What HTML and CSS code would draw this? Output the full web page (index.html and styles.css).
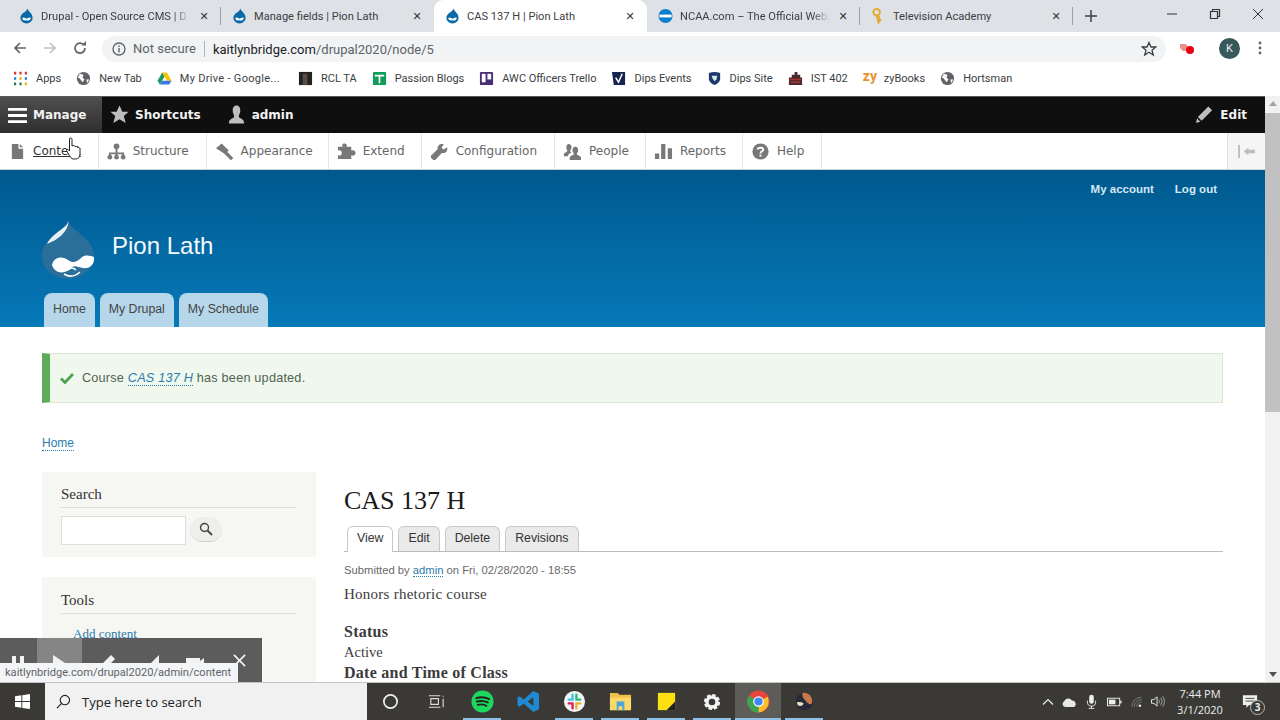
FILE: index.html
```html
<!DOCTYPE html>
<html lang="en">
<head>
    <meta charset="UTF-8">
    <title>CAS 137 H | Pion Lath</title>
    <link rel="stylesheet" href="styles.css">
</head>
<body>
    <svg class="defs" width="0" height="0">
        <symbol id="drop" viewBox="0 0 16 16">
            <path d="M9 0C9.500 3 14.500 5 14.500 10A6.500 6 0 0 1 1.500 10C1.500 5 8 4 9 0Z" fill="#0a6aa8"/>
            <path d="M3.500 10.500C5 8.500 7 11 8 11S11 9 12.500 10C12.500 12 10 13.500 8 12.500C6 13.500 4 12.500 3.500 10.500Z" fill="#fff"/>
        </symbol>
        <symbol id="globe" viewBox="0 0 16 16">
            <circle cx="8" cy="8" r="7" fill="#5f6368"/>
            <path d="M4 3L8 4L7 7L9 9L7 12L4 8L2 7ZM11 9L14 9L12 13Z" fill="#fff"/>
        </symbol>
    </svg>

    <!-- tab strip -->
    <div class="tabstrip">
        <div class="tab">
            <svg class="favicon"><use href="#drop"/></svg>
            <span class="tab-title fade">Drupal - Open Source CMS | D</span>
            <span class="tab-close">✕</span>
        </div>
        <div class="tab">
            <svg class="favicon"><use href="#drop"/></svg>
            <span class="tab-title">Manage fields | Pion Lath</span>
            <span class="tab-close">✕</span>
        </div>
        <div class="tab active">
            <svg class="favicon"><use href="#drop"/></svg>
            <span class="tab-title">CAS 137 H | Pion Lath</span>
            <span class="tab-close">✕</span>
        </div>
        <div class="tab">
            <svg class="favicon" viewBox="0 0 16 16"><circle cx="8" cy="8" r="7.500" fill="#0a7fd0"/><rect x="1.500" y="6.500" width="13" height="3" fill="#fff"/></svg>
            <span class="tab-title fade">NCAA.com – The Official Webs</span>
            <span class="tab-close">✕</span>
        </div>
        <div class="tab last">
            <svg class="favicon" viewBox="0 0 16 16"><circle cx="6" cy="4" r="3.500" fill="none" stroke="#e2ab2e" stroke-width="2"/><path d="M6 7L8 15L10 12L8 10L9 8" fill="none" stroke="#e2ab2e" stroke-width="2"/></svg>
            <span class="tab-title">Television Academy</span>
            <span class="tab-close">✕</span>
        </div>
        <svg class="new-tab" viewBox="0 0 12 12"><path d="M6 0V12M0 6H12" stroke="#3c4043" stroke-width="1.500"/></svg>
        <div class="window-controls">
            <svg viewBox="0 0 12 12"><path d="M1 6H11" stroke="#333" stroke-width="1"/></svg>
            <svg viewBox="0 0 12 12"><path d="M3.500 3.500V1.500H10.500V8.500H8.500M1.500 3.500H8.500V10.500H1.500Z" fill="none" stroke="#333" stroke-width="1.200"/></svg>
            <svg viewBox="0 0 12 12"><path d="M1 1L11 11M11 1L1 11" stroke="#333" stroke-width="1"/></svg>
        </div>
    </div>

    <!-- address bar -->
    <div class="addressbar">
        <svg class="nav-icon" viewBox="0 0 16 16"><path d="M14 8H3M8 3L3 8L8 13" fill="none" stroke="#5f6368" stroke-width="1.700"/></svg>
        <svg class="nav-icon" viewBox="0 0 16 16"><path d="M2 8H13M8 3L13 8L8 13" fill="none" stroke="#bdc1c6" stroke-width="1.700"/></svg>
        <svg class="nav-icon" viewBox="0 0 16 16"><path d="M13 8A5 5 0 1 1 11.500 4.500" fill="none" stroke="#5f6368" stroke-width="1.700"/><path d="M9.500 5.500H14V1Z" fill="#5f6368"/></svg>
        <div class="omnibox">
            <svg class="info" viewBox="0 0 14 14"><circle cx="7" cy="7" r="6" fill="none" stroke="#5f6368" stroke-width="1.300"/><path d="M7 6V10.500M7 3.500V5" stroke="#5f6368" stroke-width="1.400"/></svg>
            <span class="not-secure">Not secure</span>
            <span class="url"><b>kaitlynbridge.com</b>/drupal2020/node/5</span>
            <svg class="star" viewBox="0 0 16 16"><path d="M8 1.500L10 6H14.800L11 9.200L12.300 14L8 11.300L3.700 14L5 9.200L1.200 6H6Z" fill="none" stroke="#3c4043" stroke-width="1.300"/></svg>
        </div>
        <svg class="ext" viewBox="0 0 16 16"><path d="M1 4H7L9 7V11H4L1 8Z" fill="#ee8d8d"/><circle cx="11" cy="10" r="4" fill="#e8000e"/></svg>
        <span class="avatar">K</span>
        <svg class="menu-dots" viewBox="0 0 4 16"><circle cx="2" cy="3" r="1.400" fill="#5f6368"/><circle cx="2" cy="8" r="1.400" fill="#5f6368"/><circle cx="2" cy="13" r="1.400" fill="#5f6368"/></svg>
    </div>

    <!-- bookmarks -->
    <div class="bookmarks">
        <span class="bookmark">
            <svg class="bm-icon" viewBox="0 0 14 14">
                <path d="M1 2H3M6 2H8M11 2H13" stroke="#d93025" stroke-width="2.500"/>
                <path d="M1 7H3M11 7H13" stroke="#1a73e8" stroke-width="2.500"/><path d="M6 7H8" stroke="#f9ab00" stroke-width="2.500"/>
                <path d="M1 12H3M6 12H8" stroke="#188038" stroke-width="2.500"/><path d="M11 12H13" stroke="#f9ab00" stroke-width="2.500"/>
            </svg>Apps
        </span>
        <span class="bookmark"><svg class="bm-icon"><use href="#globe"/></svg>New Tab</span>
        <span class="bookmark wide">
            <svg class="bm-icon" viewBox="0 0 16 16"><path d="M5.500 1.500H10.500L15.500 10.500H10.500Z" fill="#ffc107"/><path d="M5.500 1.500L8 6L3 14.500L0.500 10.500Z" fill="#1e9e5a"/><path d="M5.500 10.500H15.500L13 14.500H3Z" fill="#3b78e7"/></svg>My Drive - Google...
        </span>
        <span class="bookmark"><svg class="bm-icon" viewBox="0 0 16 16"><rect x="1" y="1" width="14" height="14" fill="#222"/><rect x="5" y="3" width="5" height="12" fill="#5b4a42"/></svg>RCL TA</span>
        <span class="bookmark"><svg class="bm-icon" viewBox="0 0 16 16"><rect x="1" y="1" width="14" height="14" rx="1" fill="#0f9d58"/><path d="M3 5H13M8 5V13" stroke="#fff" stroke-width="1.800"/></svg>Passion Blogs</span>
        <span class="bookmark"><svg class="bm-icon" viewBox="0 0 16 16"><rect x="1" y="1" width="14" height="14" rx="1" fill="#4a2d73"/><rect x="3" y="3" width="4" height="9" fill="#fff"/><rect x="9" y="3" width="4" height="6" fill="#fff"/></svg>AWC Officers Trello</span>
        <span class="bookmark"><svg class="bm-icon" viewBox="0 0 16 16"><path d="M1 1H15V15H3Z" fill="#16254f"/><path d="M5 7L8 12L12 3" fill="none" stroke="#fff" stroke-width="1.600"/></svg>Dips Events</span>
        <span class="bookmark"><svg class="bm-icon" viewBox="0 0 16 16"><path d="M2 2Q8 0 14 2V9Q13 13 8 15Q3 13 2 9Z" fill="#1b3a6b"/><path d="M5 5L11 5L10 9L8 11L6 8Z" fill="#dfe6ee"/></svg>Dips Site</span>
        <span class="bookmark"><svg class="bm-icon" viewBox="0 0 16 16"><path d="M7 1H10V4H13V7H15V15H1V7H4V4H7Z" fill="#4a2a2a"/><path d="M2 9H14M3 12H13" stroke="#a33" stroke-width="1.500"/></svg>IST 402</span>
        <span class="bookmark"><span class="zy">zy</span>zyBooks</span>
        <span class="bookmark"><svg class="bm-icon"><use href="#globe"/></svg>Hortsman</span>
    </div>

    <!-- browser viewport -->
    <div class="viewport">
        <div class="site">
            <div class="toolbar">
                <span class="toolbar-item manage">
                    <svg class="tb-icon" viewBox="0 0 20 20"><path d="M1 3.500H19M1 10H19M1 16.500H19" stroke="#fff" stroke-width="3" stroke-linecap="round"/></svg>Manage
                </span>
                <span class="toolbar-item">
                    <svg class="tb-icon" viewBox="0 0 20 20"><path d="M10 0.500L13 7H19.500L14.500 11.500L16.500 19L10 15L3.500 19L5.500 11.500L0.500 7H7Z" fill="#bebebe"/></svg>Shortcuts
                </span>
                <span class="toolbar-item">
                    <svg class="tb-icon" viewBox="0 0 20 20"><path d="M10 0.500C13 0.500 14 3 14 6C14 8.500 12.500 10 12.500 12C12.500 14 18 14.500 18 18.500V19.500H2V18.500C2 14.500 7.500 14 7.500 12C7.500 10 6 8.500 6 6C6 3 7 0.500 10 0.500Z" fill="#bebebe"/></svg>admin
                </span>
                <span class="toolbar-item edit">
                    <svg class="tb-icon" viewBox="0 0 20 20"><path d="M14 1.500L18 5.500L7 16.500L3 12.500ZM2.200 14L5.500 17.500L1 19Z" fill="#bebebe"/></svg>Edit
                </span>
            </div>
            <div class="tray">
                <a class="tray-item current"><svg class="tray-icon" viewBox="0 0 16 20"><path d="M2 2H9V7H14V18H2ZM10.500 2L14 5.500H10.500Z" fill="#787878"/></svg><span class="hovered">Content</span></a>
                <a class="tray-item"><svg class="tray-icon" viewBox="0 0 20 20"><path d="M10 7V12M3 17V12H17V17M10 12V17" fill="none" stroke="#787878" stroke-width="2"/><circle cx="10" cy="4.500" r="3" fill="#787878"/><circle cx="3" cy="16" r="2.500" fill="#787878"/><circle cx="10" cy="16" r="2.500" fill="#787878"/><circle cx="17" cy="16" r="2.500" fill="#787878"/></svg>Structure</a>
                <a class="tray-item tight"><svg class="tray-icon" viewBox="0 0 20 20"><path d="M7 1.500L14.500 9L10.500 12.500L1 6.500Z" fill="#787878"/><path d="M11 11L18 18" stroke="#787878" stroke-width="3.500"/></svg>Appearance</a>
                <a class="tray-item snug"><svg class="tray-icon" viewBox="0 0 20 20"><path d="M1 5H6C5 2 6.500 1.500 8 1.500S11 2.500 10 5H15V9C17 8 19.500 9 19.500 11.500S17 15 15 14V18H1V14C4 15 5 13 5 11.500S4 8 1 9Z" fill="#787878"/></svg>Extend</a>
                <a class="tray-item"><svg class="tray-icon" viewBox="0 0 20 20"><path d="M18 5.500L14.500 8L12 6L14.500 2.500C11 1 7.500 3.500 8 7.500L1 14.500V16.500L3.500 19H5.500L12.500 11.500C16 12.500 19 9.500 18 5.500Z" fill="#787878"/></svg>Configuration</a>
                <a class="tray-item snug"><svg class="tray-icon" viewBox="0 0 20 20"><path d="M6 2C8 2 9 3.500 9 5.500C9 7.500 7.500 8.500 7.500 10L9 11C6 12 5 14 5 15H1V13C1 11 4.500 11 4.500 9.500C4.500 8.500 3.500 7.500 3.500 5.500S4.500 2 6 2Z" fill="#787878"/><path d="M13 5C15.500 5 16 7 16 9S14.500 11.500 14.500 12.500C14.500 14 19 14 19 17V19H7V17C7 14 11.500 14 11.500 12.500C11.500 11.500 10 11 10 9S10.500 5 13 5Z" fill="#787878"/></svg>People</a>
                <a class="tray-item snug"><svg class="tray-icon" viewBox="0 0 20 20"><path d="M1 12H5.500V18H1ZM7.500 2H12V18H7.500ZM14.500 6.500H19V18H14.500Z" fill="#787878"/></svg>Reports</a>
                <a class="tray-item help"><svg class="tray-icon" viewBox="0 0 20 20"><circle cx="10" cy="10" r="8.500" fill="#787878"/><path d="M7 8C7 5.500 13 5.500 13 8C13 10 10 9.500 10 12" fill="none" stroke="#fff" stroke-width="2"/><rect x="9" y="13.300" width="2" height="2" fill="#fff"/></svg>Help</a>
                <span class="tray-toggle"><svg viewBox="0 0 20 14" class="toggle-icon"><path d="M1 0H3V14H1ZM7 7L12 3V5H19V9H12V11Z" fill="#bdbdbd"/></svg></span>
            </div>

            <header class="site-header">
                <nav class="secondary-menu">
                    <a>My account</a>
                    <a>Log out</a>
                </nav>
                <div class="branding">
                    <svg class="logo" viewBox="0 0 54 60">
                        <path d="M27 1C28 11 53 18 53 37A26 23 0 0 1 1 37C1 18 25 12 27 1Z" fill="#2a6f99"/>
                        <path d="M28 1C27 9 12 13 6 25C16 21 27 14 28 1Z" fill="#e6f0f6"/>
                        <path d="M11 46C13 37 22 37 27 41C31 44 35 44 40 39C44 35 50 37 53 38C54 46 48 50 42 49C37 48 34 46 31 48C26 55 14 56 11 46Z" fill="#fff"/>
                        <path d="M23 55Q31 60 39 53M27 51Q31 47 35 51" fill="none" stroke="#fff" stroke-width="1.600"/>
                    </svg>
                    <span class="site-name">Pion Lath</span>
                </div>
                <nav class="primary-menu">
                    <a>Home</a>
                    <a>My Drupal</a>
                    <a>My Schedule</a>
                </nav>
            </header>

            <div class="status-message">
                <svg class="check" viewBox="0 0 14 12"><path d="M1 6.500L5 10.500L13 2" fill="none" stroke="#4fa24f" stroke-width="2.800"/></svg>
                <span>Course <a class="link-dotted"><em>CAS 137 H</em></a> has been updated.</span>
            </div>

            <div class="breadcrumb"><a class="link-dotted">Home</a></div>

            <div class="layout">
                <aside class="sidebar">
                    <section class="block">
                        <h2>Search</h2>
                        <div class="search-row">
                            <input class="search-input" type="text">
                            <span class="search-btn"><svg viewBox="0 0 14 14"><circle cx="5.500" cy="5.500" r="4" fill="none" stroke="#444" stroke-width="1.400"/><path d="M8.500 8.500L13 13" stroke="#444" stroke-width="1.800"/></svg></span>
                        </div>
                    </section>
                    <section class="block">
                        <h2>Tools</h2>
                        <a class="tool-link">Add content</a>
                    </section>
                </aside>
                <main class="content">
                    <h1>CAS 137 H</h1>
                    <ul class="tabs">
                        <li class="selected">View</li>
                        <li>Edit</li>
                        <li>Delete</li>
                        <li>Revisions</li>
                    </ul>
                    <p class="submitted">Submitted by <a class="link-dotted">admin</a> on Fri, 02/28/2020 - 18:55</p>
                    <p class="body-text">Honors rhetoric course</p>
                    <div class="field-label first">Status</div>
                    <div class="field-value">Active</div>
                    <div class="field-label">Date and Time of Class</div>
                </main>
            </div>
        </div>
        <div class="scrollbar">
            <span class="arrow up"></span>
            <span class="thumb"></span>
            <span class="arrow down"></span>
        </div>

        <!-- screen recorder controls and link preview lie over the page -->
        <div class="recorder">
            <svg class="rec-icon" viewBox="0 0 20 20"><path d="M4 2H8V18H4ZM12 2H16V18H12Z" fill="#f2f2f2"/></svg>
            <span class="rec-play"><svg class="rec-icon" viewBox="0 0 20 20"><path d="M3 1L18 11L3 20Z" fill="#f2f2f2"/></svg></span>
            <svg class="rec-icon" viewBox="0 0 20 20"><path d="M14 1L18 5L7 16L3 12ZM2 13.500L5.500 17L1 18.500Z" fill="#f2f2f2"/></svg>
            <svg class="rec-icon" viewBox="0 0 20 20"><path d="M19 1V20H0Z" fill="#f2f2f2"/></svg>
            <svg class="rec-icon" viewBox="0 0 20 20"><path d="M1 4H15V7L19 4V16H1Z" fill="#f2f2f2"/></svg>
            <svg class="rec-close" viewBox="0 0 14 14"><path d="M1 1L13 13M13 1L1 13" stroke="#f2f2f2" stroke-width="1.800"/></svg>
        </div>
        <div class="link-preview">kaitlynbridge.com/drupal2020/admin/content</div>

        <!-- mouse pointer -->
        <svg class="pointer" viewBox="0 0 16 24"><path d="M4 1.500C5 0.500 6.500 1 6.500 2.500V9C8 8 9 8.500 9.500 9.500C11 9 12 9.500 12 10.500C13.500 10 14.500 11 14.500 12.500V17C14.500 20 13 22 10 22H8C5.500 22 5 20 3.500 18L1 13.500C1 12 2.500 12 4 14Z" fill="#fff" stroke="#222" stroke-width="1"/></svg>
    </div>

    <!-- windows taskbar -->
    <div class="taskbar">
        <span class="start"><svg viewBox="0 0 16 16"><path d="M0 2.300L6.800 1.300V7.500H0ZM7.800 1.200L16 0V7.500H7.800ZM0 8.500H6.800V14.700L0 13.700ZM7.800 8.500H16V16L7.800 14.800Z" fill="#fff"/></svg></span>
        <div class="search-box">
            <svg class="search-glass" viewBox="0 0 16 16"><circle cx="9.500" cy="6.500" r="5" fill="none" stroke="#222" stroke-width="1.200"/><path d="M6 10L1 15" stroke="#222" stroke-width="1.300"/></svg>
            Type here to search
        </div>
        <div class="task-icons">
            <span class="task small"><svg viewBox="0 0 20 20"><circle cx="10" cy="10" r="7" fill="none" stroke="#eee" stroke-width="1.800"/></svg></span>
            <span class="task small"><svg viewBox="0 0 20 20"><path d="M2 4H14M2 16H14M4 7H12V13H4Z" fill="none" stroke="#ddd" stroke-width="1.200"/><path d="M17 4V5M17 7V16" stroke="#ddd" stroke-width="1.200"/></svg></span>
            <span class="task open"><svg viewBox="0 0 24 24"><circle cx="12" cy="12" r="11.500" fill="#1ed760"/><path d="M5.500 8.500C10 7 15 7.500 19 9.500M6 12C10 11 14.500 11.500 17.500 13M7 15.500C10 14.700 13.500 15 16 16.500" fill="none" stroke="#222" stroke-width="2" stroke-linecap="round"/></svg></span>
            <span class="task"><svg viewBox="0 0 24 24"><path d="M17 1L23 4V20L17 23L7 14L2.500 17.500L0.500 16V8L2.500 6.500L7 10ZM17 7.500L11 12L17 16.500Z" fill="#1f8ad2"/></svg></span>
            <span class="task open"><svg viewBox="0 0 24 24"><circle cx="12" cy="12" r="11" fill="#f4f4f4"/><path d="M10 5V10M6 10H10" stroke="#36c5f0" stroke-width="2.500" stroke-linecap="round"/><path d="M14 5V10M14 10H18" stroke="#2eb67d" stroke-width="2.500" stroke-linecap="round"/><path d="M14 19V14M18 14H14" stroke="#ecb22e" stroke-width="2.500" stroke-linecap="round"/><path d="M10 19V14M10 14H6" stroke="#e01e5a" stroke-width="2.500" stroke-linecap="round"/></svg></span>
            <span class="task open"><svg viewBox="0 0 24 24"><path d="M1 3H9L11 5H23V21H1Z" fill="#f0c04a"/><path d="M1 8H23V21H1Z" fill="#fbd968"/><path d="M8 12H16V21H14V17H10V21H8Z" fill="#4aa3df"/></svg></span>
            <span class="task open"><svg viewBox="0 0 24 24"><path d="M3 3H21V21H3Z" fill="#fde012"/><path d="M21 12V21H12Z" fill="#222"/></svg></span>
            <span class="task open gear"><svg viewBox="0 0 24 24"><circle cx="12" cy="12" r="6" fill="none" stroke="#f4f4f4" stroke-width="4"/><circle cx="12" cy="12" r="8" fill="none" stroke="#f4f4f4" stroke-width="3.500" stroke-dasharray="4 2.280"/></svg></span>
            <span class="task open focus"><svg viewBox="0 0 24 24"><circle cx="12" cy="12" r="11.500" fill="#e8453c"/><path d="M12 12L21.500 7A11.500 11.500 0 0 1 12 23.500Z" fill="#fbc02d"/><path d="M12 12L12 23.500A11.500 11.500 0 0 1 2 6Z" fill="#3ba64f"/><circle cx="12" cy="12" r="5.500" fill="#fff"/><circle cx="12" cy="12" r="4.300" fill="#4285f4"/></svg></span>
            <span class="task open"><svg viewBox="0 0 24 24"><circle cx="12" cy="12" r="9" fill="#252a36"/><path d="M10 3C15 2 21 6 20 13C19 17 15 14 13 11C11 9 9 6 10 3Z" fill="#c7784a"/><path d="M4 13C6 12 10 13 11 14C10 17 7 17 5 16Z" fill="#eadcc0"/></svg></span>
        </div>
        <div class="systray">
            <svg class="sys-chevron" viewBox="0 0 12 8"><path d="M1 6.500L6 1.500L11 6.500" fill="none" stroke="#eee" stroke-width="1.200"/></svg>
            <svg class="sys-cloud" viewBox="0 0 16 10"><path d="M4 10A3 3 0 0 1 3 4.500A4.500 4.500 0 0 1 11 3.500A3.500 3.500 0 0 1 13 10Z" fill="#e8e8e8"/></svg>
            <svg class="sys-mic" viewBox="0 0 12 16"><rect x="3.500" y="0.500" width="5" height="10" rx="2.500" fill="#eee"/><path d="M1.500 7V8.500A4.500 4.500 0 0 0 10.500 8.500V7M6 13V15.500M3 15.500H9" fill="none" stroke="#eee" stroke-width="1"/></svg>
            <svg class="sys-batt" viewBox="0 0 16 10"><rect x="0.500" y="1" width="13" height="8" fill="none" stroke="#eee"/><rect x="2" y="2.500" width="7" height="5" fill="#eee"/><rect x="14" y="3.500" width="1.500" height="3" fill="#eee"/></svg>
            <svg class="sys-wifi" viewBox="0 0 16 14"><path d="M1 13A12 12 0 0 1 13 1M4 13A9 9 0 0 1 13 4M7 13A6 6 0 0 1 13 7" fill="none" stroke="#888" stroke-width="1"/><circle cx="11" cy="11.500" r="1.500" fill="#eee"/></svg>
            <svg class="sys-vol" viewBox="0 0 16 14"><path d="M1 5H3.500L7 2V12L3.500 9H1Z" fill="none" stroke="#eee"/><path d="M9 5Q10.500 7 9 9M11 3Q14 7 11 11M13 1.500Q17 7 13 12.500" fill="none" stroke="#aaa"/></svg>
            <div class="clock"><span>7:44 PM</span><span>3/1/2020</span></div>
            <span class="notify">
                <svg viewBox="0 0 18 16"><path d="M1 1H17V12H8L5 15V12H1Z" fill="#eee"/><path d="M4 4.500H14M4 7.500H14" stroke="#3a3936"/></svg>
                <span class="notify-count">3</span>
            </span>
        </div>
    </div>
</body>
</html>
```
FILE: styles.css
```css
* {
    box-sizing: border-box;
}

html, body {
    margin: 0;
    height: 720px;
    overflow: hidden;
}

body {
    width: 1280px;
    display: flex;
    flex-direction: column;
    font-family: "Liberation Sans", Arial, sans-serif;
    background: #fff;
}

.defs {
    position: absolute;
}

/* browser chrome */
.tabstrip {
    height: 32px;
    flex: none;
    display: flex;
    align-items: center;
    background: #dee1e6;
    padding-left: 8px;
}

.tab {
    width: 213px;
    height: 32px;
    display: flex;
    align-items: center;
    padding: 0 10px 0 11px;
    position: relative;
    font-family: Roboto, sans-serif;
    font-size: 11.100px;
    color: #3c4043;
}

.tab::after {
    content: "";
    position: absolute;
    right: 0;
    top: 7px;
    height: 18px;
    width: 1px;
    background: #9da1a6;
}

.tab:nth-child(2)::after {
    display: none;
}

.tab.active {
    background: #fff;
    border-radius: 9px 9px 0 0;
}

.tab.active::after {
    display: none;
}

.favicon {
    width: 15px;
    height: 16px;
    flex: none;
    margin-right: 7px;
}

.tab-title {
    flex: 1;
    white-space: nowrap;
    overflow: hidden;
    padding-left: 0;
}

.tab-title.fade {
    -webkit-mask-image: linear-gradient(to right, #000 88%, transparent);
    mask-image: linear-gradient(to right, #000 88%, transparent);
}

.tab-close {
    flex: none;
    width: 14px;
    margin-left: 6px;
    font-size: 11px;
    font-family: "DejaVu Sans", sans-serif;
    text-align: center;
    color: #333;
}

.new-tab {
    width: 12px;
    height: 12px;
    margin-left: 12px;
    flex: none;
}

.window-controls {
    margin-left: auto;
    display: flex;
    align-items: center;
    gap: 31px;
    padding-right: 16px;
    margin-top: -4px;
}

.window-controls svg {
    width: 12px;
    height: 12px;
}

.addressbar {
    height: 32px;
    flex: none;
    display: flex;
    align-items: center;
    background: #fff;
    padding-left: 12px;
    font-family: Roboto, sans-serif;
}

.nav-icon {
    width: 16px;
    height: 16px;
    flex: none;
    margin-right: 14px;
}

.omnibox {
    width: 1064px;
    height: 26px;
    margin-top: 2px;
    background: #f1f3f4;
    border-radius: 13px;
    display: flex;
    align-items: center;
    padding-left: 10px;
    padding-right: 9px;
    font-size: 13px;
    color: #5f6368;
}

.info {
    width: 14px;
    height: 14px;
    margin-right: 7px;
}

.not-secure {
    padding-right: 8px;
    border-right: 1px solid #b0b3b8;
    line-height: 16px;
    margin-right: 8px;
}

.url b {
    font-weight: 400;
    color: #202124;
}

.star {
    width: 16px;
    height: 16px;
    margin-left: auto;
}

.ext {
    width: 16px;
    height: 16px;
    margin-left: 13px;
    flex: none;
}

.avatar {
    width: 21px;
    height: 21px;
    margin-left: 24px;
    border-radius: 50%;
    background: #37595c;
    color: #e8eeee;
    font-size: 11px;
    display: flex;
    align-items: center;
    justify-content: center;
    flex: none;
}

.menu-dots {
    width: 4px;
    height: 16px;
    margin-left: 18px;
}

.bookmarks {
    height: 32px;
    flex: none;
    display: flex;
    align-items: center;
    gap: 15px;
    padding: 0 0 4px 13px;
    background: #fff;
    font-family: Roboto, sans-serif;
    font-size: 11px;
    color: #3c4043;
}

.bookmark {
    display: flex;
    align-items: center;
    white-space: nowrap;
}

.bookmark.wide {
    margin-right: 3px;
    letter-spacing: 0.300px;
}

.bm-icon {
    width: 15px;
    height: 15px;
    margin-right: 8px;
}

.zy {
    color: #e8912c;
    font-weight: 700;
    font-size: 14px;
    margin-right: 6px;
    width: 15px;
    line-height: 12px;
    margin-top: -5px;
}

/* browser viewport */
.viewport {
    position: relative;
    flex: 1;
    min-height: 0;
    display: flex;
    overflow: hidden;
    background: #fff;
}

.site {
    flex: 1;
    min-width: 0;
}

.scrollbar {
    width: 15px;
    flex: none;
    background: #f1f1f1;
    display: flex;
    flex-direction: column;
    align-items: center;
}

.arrow {
    width: 0;
    height: 0;
    border-left: 4px solid transparent;
    border-right: 4px solid transparent;
    flex: none;
}

.arrow.up {
    border-bottom: 5px solid #a3a3a3;
    margin: 5px 0 7px;
}

.arrow.down {
    border-top: 5px solid #505050;
    margin-top: auto;
    margin-bottom: 5px;
}

.thumb {
    width: 15px;
    height: 299px;
    background: #c1c1c1;
}

/* admin toolbar */
.toolbar {
    height: 37px;
    display: flex;
    background: #0f0f0f;
    border-top: 1px solid #5a5a5a;
    padding-bottom: 1px;
    font-family: "DejaVu Sans", Verdana, sans-serif;
    font-size: 12px;
    font-weight: 700;
    color: #f2f2f2;
}

.toolbar-item {
    display: flex;
    align-items: center;
    padding: 0 9px 0 8px;
}

.toolbar-item.manage {
    width: 102px;
    background: linear-gradient(#4f4f4f, #2e2e2e);
    margin-bottom: -1px;
}

.tb-icon {
    width: 19px;
    height: 19px;
    margin-right: 6px;
    flex: none;
}

.toolbar-item + .toolbar-item {
    padding-left: 8px;
    padding-right: 18px;
}

.toolbar-item.edit {
    margin-left: auto;
    padding-right: 18px;
}

.tray {
    height: 37px;
    display: flex;
    background: #fff;
    border-bottom: 1px solid #c9d3d9;
    font-family: "DejaVu Sans", Verdana, sans-serif;
    font-size: 12px;
    color: #666;
}

.tray-item {
    display: flex;
    align-items: center;
    padding: 0 17px 0 8px;
    border-right: 1px solid #e6e6e6;
    white-space: nowrap;
}

.tray-item.tight {
    padding-right: 15px;
}

.tray-item.snug {
    padding-right: 16px;
}

.tray-item.current {
    padding-left: 10px;
    color: #333;
}

.hovered {
    text-decoration: underline;
}

.tray-icon {
    width: 19px;
    height: 19px;
    margin-right: 7px;
    flex: none;
}

.tray-item.current .tray-icon {
    width: 15px;
    margin-right: 8px;
}

.tray-toggle {
    margin-left: auto;
    width: 38px;
    background: #f5f5f5;
    border-left: 1px solid #e0e0e0;
    display: flex;
    align-items: center;
    justify-content: center;
}

.toggle-icon {
    width: 19px;
    height: 13px;
}

/* site header */
.site-header {
    height: 157px;
    background: linear-gradient(#00598e, #0679b8);
    display: flex;
    flex-direction: column;
    padding: 10px 48px 0 42px;
}

.secondary-menu {
    display: flex;
    justify-content: flex-end;
    gap: 21px;
    font-size: 11.500px;
    font-weight: 700;
    line-height: 18px;
    color: #d5e8f4;
}

.branding {
    display: flex;
    align-items: center;
    margin-top: 22px;
    height: 58px;
}

.logo {
    width: 54px;
    height: 60px;
    margin-right: 17px;
    margin-left: -1px;
}

.site-name {
    font-size: 24px;
    color: #f4fafd;
    padding-bottom: 6px;
}

.primary-menu {
    display: flex;
    gap: 5px;
    margin-top: auto;
    margin-left: 2px;
    font-size: 12.300px;
    color: #444;
}

.primary-menu a {
    height: 34px;
    padding: 0 9px;
    line-height: 33px;
    background: #b6d6ea;
    border-radius: 8px 8px 0 0;
}

/* page content */
.status-message {
    height: 50px;
    margin: 26px 42px 0;
    background: #f0f8ed;
    border: 1px solid #d8e8d2;
    border-left: 8px solid #5cac5c;
    display: flex;
    align-items: center;
    padding-left: 10px;
    font-size: 12.700px;
    color: #4f6353;
    letter-spacing: 0.200px;
}

.check {
    width: 14px;
    height: 12px;
    margin-right: 8px;
}

.link-dotted {
    color: #2b7cad;
    border-bottom: 1px dotted #2b7cad;
}

.breadcrumb {
    margin: 33px 42px 0;
    font-size: 12px;
    line-height: 14px;
}

.layout {
    display: flex;
    gap: 28px;
    margin: 22px 42px 0;
}

.sidebar {
    width: 274px;
    flex: none;
    display: flex;
    flex-direction: column;
    gap: 20px;
}

.block {
    background: #f6f6f2;
    padding: 14px 20px 12px 19px;
}

.block + .block {
    padding-top: 15px;
}

.block h2 {
    margin: 0 0 8px;
    padding-bottom: 4px;
    border-bottom: 1px solid #e0e0d8;
    font-family: "Liberation Serif", Georgia, serif;
    font-size: 15px;
    line-height: 17px;
    font-weight: 400;
    color: #333;
}

.search-row {
    display: flex;
    align-items: center;
    gap: 4px;
}

.search-input {
    width: 125px;
    height: 29px;
    border: 1px solid #ddd;
    background: #fff;
}

.search-btn {
    width: 32px;
    height: 25px;
    border-radius: 13px;
    background: #eeeeea;
    border-bottom: 1px solid #d0d0ca;
    display: flex;
    align-items: center;
    justify-content: center;
    margin-top: -3px;
}

.search-btn svg {
    width: 14px;
    height: 14px;
}

.tool-link {
    display: block;
    margin-left: 12px;
    margin-top: 12px;
    font-family: "Liberation Serif", Georgia, serif;
    font-size: 13px;
    color: #2b7cad;
    height: 56px;
}

.content {
    flex: 1;
    min-width: 0;
    font-family: "Liberation Serif", Georgia, serif;
    color: #3b3b3b;
}

.content h1 {
    margin: 13px 0 9px;
    font-size: 26px;
    line-height: 32px;
    font-weight: 400;
    color: #1a1a1a;
}

.tabs {
    list-style: none;
    margin: 0;
    padding: 0 0 0 3px;
    height: 26px;
    display: flex;
    gap: 5px;
    border-bottom: 1px solid #bbb;
    font-family: "Liberation Sans", Arial, sans-serif;
    font-size: 12.300px;
    color: #333;
}

.tabs li {
    height: 25px;
    padding: 0 9px;
    line-height: 23px;
    background: #eaeaea;
    border: 1px solid #c8c8c8;
    border-bottom: none;
    border-radius: 6px 6px 0 0;
}

.tabs li.selected {
    height: 26px;
    background: #fff;
}

.submitted {
    margin: 11px 0 0;
    font-family: "Liberation Sans", Arial, sans-serif;
    font-size: 11.250px;
    line-height: 14px;
    color: #68696b;
}

.body-text {
    margin: 9px 0 0;
    font-size: 15px;
    line-height: 17px;
    letter-spacing: 0.250px;
}

.field-label {
    font-size: 16px;
    line-height: 20px;
    font-weight: 700;
    letter-spacing: 0.250px;
}

.field-label.first {
    margin-top: 19px;
}

.field-value {
    font-size: 14.500px;
    line-height: 21px;
}

/* overlays */
.recorder {
    position: absolute;
    left: 0;
    bottom: 0;
    width: 262px;
    height: 44px;
    background: #5c5c5c;
    display: flex;
    align-items: flex-start;
    padding: 16px 0 0 8px;
}

.rec-icon {
    width: 20px;
    height: 20px;
    flex: none;
}

.rec-play {
    width: 45px;
    height: 44px;
    margin: -16px 15px 0 9px;
    background: #858585;
    display: flex;
    justify-content: center;
    padding-top: 16px;
}

.recorder > .rec-icon {
    margin-right: 23px;
}

.recorder > .rec-icon:first-child {
    margin-right: 0;
}

.recorder > .rec-icon:nth-child(4) {
    margin-right: 25px;
}

.rec-close {
    width: 13px;
    height: 13px;
    margin-left: 5px;
    flex: none;
}

.link-preview {
    position: absolute;
    left: 0;
    bottom: 0;
    width: 238px;
    height: 19px;
    padding-left: 5px;
    background: #f4f5f6;
    font-family: Roboto, sans-serif;
    font-size: 11.100px;
    line-height: 20px;
    color: #5f6368;
    white-space: nowrap;
}

.pointer {
    position: absolute;
    left: 65px;
    top: 41px;
    width: 17px;
    height: 24px;
}

/* taskbar */
.taskbar {
    height: 38px;
    flex: none;
    display: flex;
    align-items: stretch;
    background: #3a3936;
    border-top: 1px solid #c4c4c4;
}

.start {
    width: 45px;
    flex: none;
    display: flex;
    align-items: center;
    justify-content: center;
}

.start svg {
    width: 15px;
    height: 15px;
}

.search-box {
    width: 322px;
    flex: none;
    background: #f1f1f1;
    display: flex;
    align-items: center;
    padding-left: 11px;
    font-family: "Open Sans", sans-serif;
    font-size: 13px;
    color: #222;
}

.search-glass {
    width: 15px;
    height: 15px;
    margin-right: 11px;
}

.task-icons {
    display: flex;
}

.task {
    width: 46px;
    flex: none;
    display: flex;
    align-items: center;
    justify-content: center;
    position: relative;
}

.task svg {
    width: 23px;
    height: 23px;
}

.task.small svg {
    width: 19px;
    height: 19px;
}

.task.gear svg {
    width: 20px;
    height: 20px;
}

.task.open::after {
    content: "";
    position: absolute;
    left: 4px;
    right: 4px;
    bottom: 0;
    height: 2px;
    background: #8fc1e8;
}

.task.focus {
    background: #5d5c59;
}

.task.focus::after {
    left: 0;
    right: 0;
}

.systray {
    margin-left: auto;
    display: flex;
    align-items: center;
    color: #eee;
    padding-right: 22px;
}

.systray svg {
    flex: none;
}

.sys-chevron {
    width: 12px;
    height: 8px;
    margin-right: 7px;
}

.sys-cloud {
    width: 16px;
    height: 10px;
    margin-right: 9px;
}

.sys-mic {
    width: 11px;
    height: 15px;
    margin-right: 10px;
}

.sys-batt {
    width: 15px;
    height: 10px;
    margin-right: 9px;
}

.sys-wifi {
    width: 13px;
    height: 12px;
    margin-right: 6px;
}

.sys-vol {
    width: 16px;
    height: 13px;
    margin-right: 7px;
}

.clock {
    display: flex;
    flex-direction: column;
    align-items: center;
    font-family: "Open Sans", sans-serif;
    font-size: 11px;
    line-height: 16px;
    width: 54px;
    margin-right: 15px;
}

.notify {
    position: relative;
    display: flex;
}

.notify svg {
    width: 16px;
    height: 15px;
}

.notify-count {
    position: absolute;
    right: -7px;
    bottom: -6px;
    width: 15px;
    height: 15px;
    border-radius: 50%;
    background: #3a3936;
    border: 1px solid #bbb;
    font-family: "Open Sans", sans-serif;
    font-size: 10px;
    font-weight: 700;
    line-height: 13px;
    text-align: center;
}
```
